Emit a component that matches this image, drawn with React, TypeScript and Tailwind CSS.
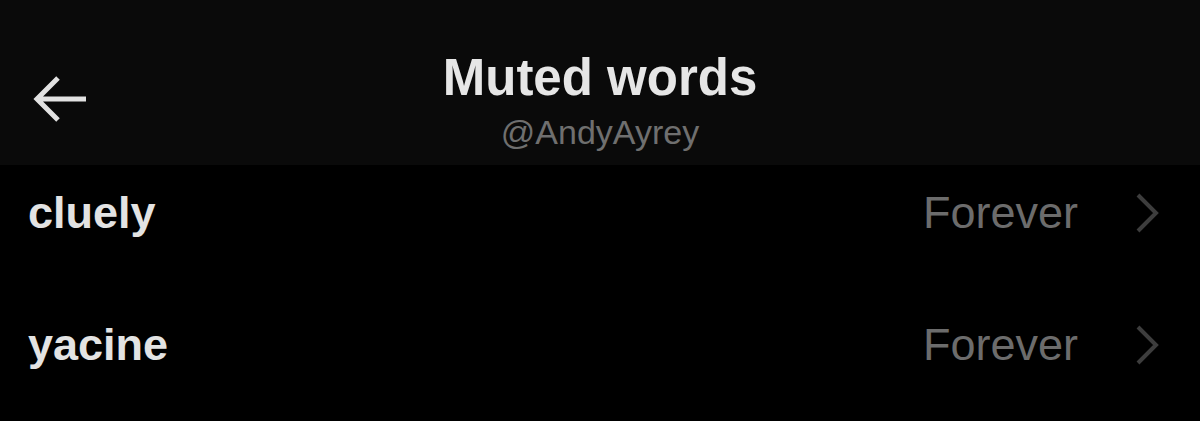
const mutedWords = [
  { word: "cluely", duration: "Forever" },
  { word: "yacine", duration: "Forever" },
];

function BackArrow() {
  return (
    <svg width="56" height="46" viewBox="0 0 56 46" fill="none" aria-hidden="true">
      <path
        d="M25 2L4 23L25 44M4 23H53"
        stroke="#e2e2e2"
        strokeWidth="5"
        strokeLinecap="butt"
        strokeLinejoin="miter"
      />
    </svg>
  );
}

function Chevron() {
  return (
    <svg width="24" height="40" viewBox="0 0 24 40" fill="none" aria-hidden="true">
      <path d="M2 2L20 20L2 38" stroke="#3d3d3d" strokeWidth="4" />
    </svg>
  );
}

export default function App() {
  return (
    <div
      className="w-[1200px] h-[421px] overflow-hidden bg-black"
      style={{ fontFamily: '"Liberation Sans", Arial, sans-serif' }}
    >
      <header className="h-[165px] bg-[#0a0a0a] grid grid-cols-[1fr_auto_1fr]">
        <div className="flex items-start pl-[33px] pt-[76px]">
          <BackArrow />
        </div>
        <div className="flex flex-col items-center pt-[52px]">
          <h1 className="text-[51px] leading-none font-bold text-[#e6e6e6]">
            Muted words
          </h1>
          <p className="mt-[12px] text-[34px] leading-none text-[#6f6f6f]">
            @AndyAyrey
          </p>
        </div>
        <div />
      </header>

      <ul>
        {mutedWords.map((item) => (
          <li
            key={item.word}
            className="h-[132px] flex items-start justify-between pl-[28px] pr-[40px] pt-[25px]"
          >
            <span className="text-[45px] leading-none font-bold text-[#e3e3e3]">
              {item.word}
            </span>
            <span className="flex items-center gap-[58px]">
              <span className="text-[45px] leading-none text-[#6c6c6c]">
                {item.duration}
              </span>
              <Chevron />
            </span>
          </li>
        ))}
      </ul>
    </div>
  );
}
